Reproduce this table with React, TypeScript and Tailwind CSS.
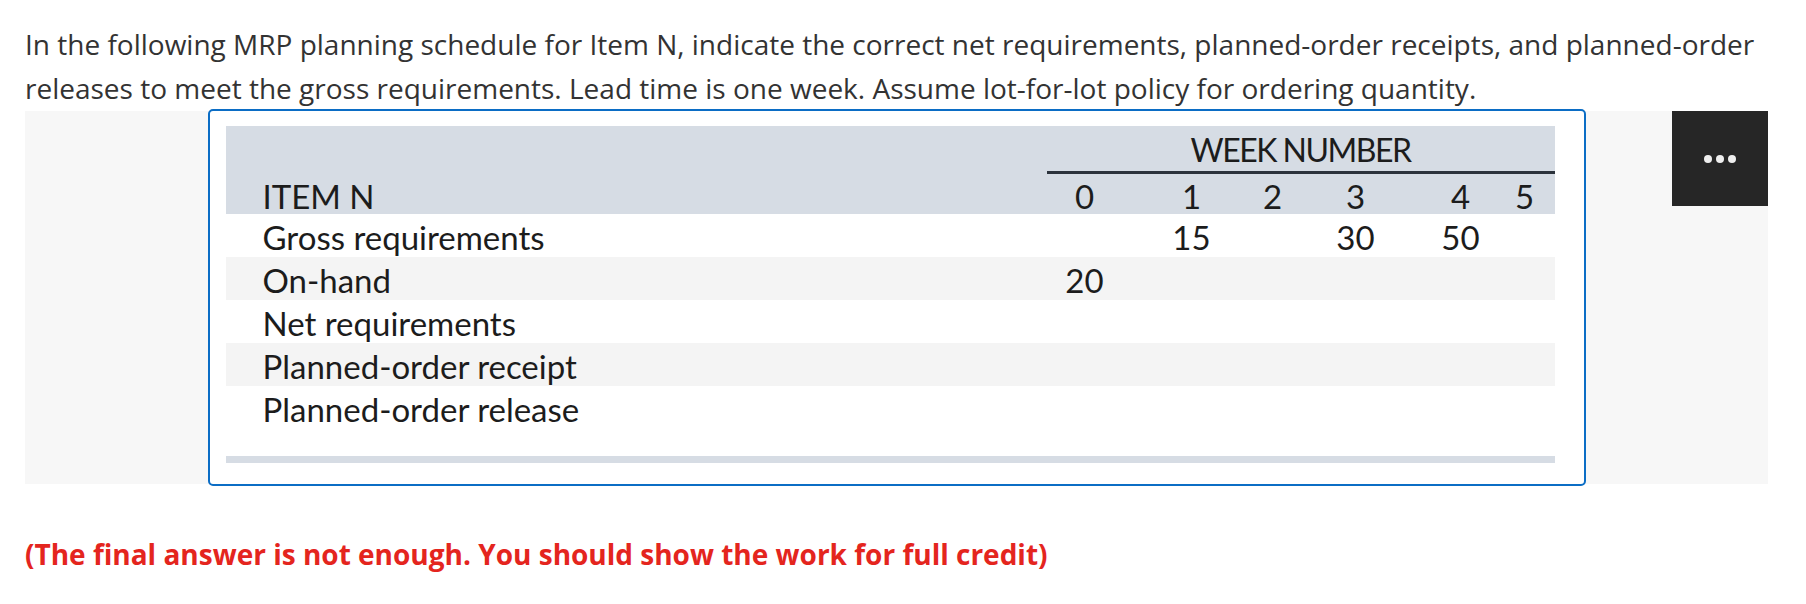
const rows = [
  { label: "Gross requirements", values: ["", "15", "", "30", "50", ""], shade: false },
  { label: "On-hand", values: ["20", "", "", "", "", ""], shade: true },
  { label: "Net requirements", values: ["", "", "", "", "", ""], shade: false },
  { label: "Planned-order receipt", values: ["", "", "", "", "", ""], shade: true },
  { label: "Planned-order release", values: ["", "", "", "", "", ""], shade: false },
];

const weeks = ["0", "1", "2", "3", "4", "5"];

const grid = "grid grid-cols-[821px_76px_138px_24px_142px_68px_60px]";

const MrpTable = () => {
  return (
    <div className="w-[1329px] font-['Lato',sans-serif] text-[33px] text-[#1c1c1c]">
      <div className="bg-[#d6dce4]">
        <div className={`${grid} h-[48px]`}>
          <div />
          <div className="col-span-6 flex items-end justify-center border-b-[3px] border-[#2c333c] pb-[5px] text-[32px] leading-none tracking-[-1.5px]">
            WEEK NUMBER
          </div>
        </div>
        <div className={`${grid} h-[40px] items-center pt-[5px] leading-none`}>
          <div className="pl-[37px]">ITEM N</div>
          {weeks.map((w) => (
            <div key={w} className="text-center">
              {w}
            </div>
          ))}
        </div>
      </div>
      {rows.map((row) => (
        <div
          key={row.label}
          className={`${grid} h-[43px] items-center pt-[3px] leading-none ${row.shade ? "bg-[#f4f4f4]" : "bg-white"}`}
        >
          <div className="pl-[37px]">{row.label}</div>
          {row.values.map((v, i) => (
            <div key={i} className="text-center">
              {v}
            </div>
          ))}
        </div>
      ))}
      <div className="h-[27px]" />
      <div className="h-[7px] bg-[#d6dce4]" />
    </div>
  );
};

export default function App() {
  return (
    <div className="min-h-screen bg-white pl-[25px] pr-[30px] pt-[22px] font-['Open_Sans',sans-serif]">
      <p className="text-[28px] leading-[44px] text-[#333333]">
        In the following MRP planning schedule for Item N, indicate the correct net requirements, planned-order receipts, and planned-order
        <br />
        releases to meet the gross requirements. Lead time is one week. Assume lot-for-lot policy for ordering quantity.
      </p>

      <div className="relative mt-[1px] flex h-[373px] w-[1743px] justify-center bg-[#f7f7f7]">
        <div className="-mt-[2px] h-[377px] w-[1378px] rounded-[5px] border-2 border-[#0b6dc5] bg-white pl-[16px] pt-[15px]">
          <MrpTable />
        </div>
        <button className="absolute right-0 top-0 flex h-[95px] w-[96px] items-center justify-center gap-[4px] bg-[#262626]">
          <span className="h-[8px] w-[8px] rounded-full bg-[#eeeeee]" />
          <span className="h-[8px] w-[8px] rounded-full bg-[#eeeeee]" />
          <span className="h-[8px] w-[8px] rounded-full bg-[#eeeeee]" />
        </button>
      </div>

      <p className="mt-[48px] text-[28px] font-bold leading-[44px] text-[#e4251e]">
        (The final answer is not enough. You should show the work for full credit)
      </p>
    </div>
  );
}
